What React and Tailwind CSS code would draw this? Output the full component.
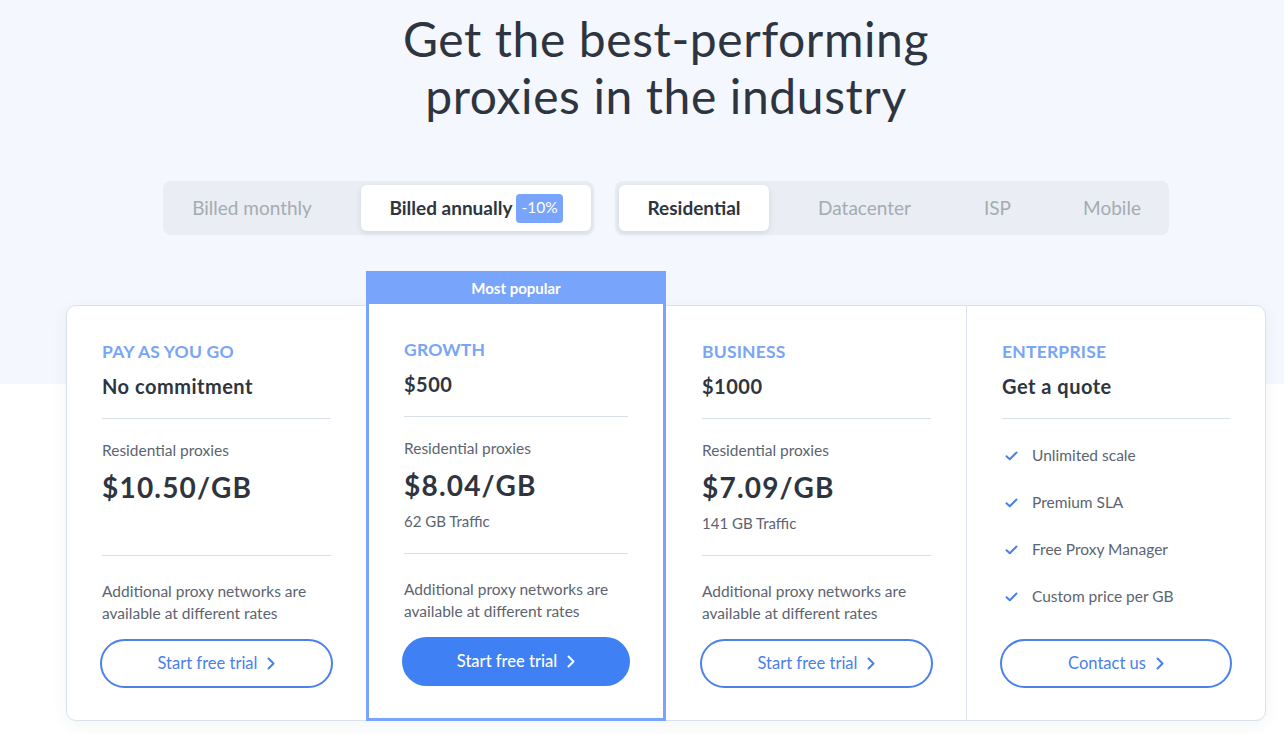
import React from "react";

const Chevron = ({ className = "" }) => (
  <svg className={className} width="8" height="13" viewBox="0 0 8 13" fill="none">
    <path d="M1.5 1.5L6.5 6.5L1.5 11.5" stroke="currentColor" strokeWidth="2" strokeLinecap="round" strokeLinejoin="round" />
  </svg>
);

const Check = () => (
  <svg width="13" height="10" viewBox="0 0 13 10" fill="none">
    <path d="M1.5 5.2L4.8 8.3L11.5 1.5" stroke="#4a80e8" strokeWidth="2" strokeLinecap="round" strokeLinejoin="round" />
  </svg>
);

const OutlineButton = ({ children }) => (
  <button className="-mx-[2px] h-[49px] rounded-full border-2 border-[#4a82ec] bg-white text-[#4a80e8] text-[16.5px] flex items-center justify-center gap-[10px]">
    <span>{children}</span>
    <Chevron />
  </button>
);

const PriceColumn = ({ label, title, price, traffic, highlighted, pl = "pl-[35px]" }) => (
  <div className={`flex flex-col ${pl} pr-[35px] pt-[34px] pb-[32px] h-full`}>
    <div className="text-[17.5px] leading-[24px] font-bold text-[#78a5f5] tracking-[0.2px]">{label}</div>
    <div className="mt-[9px] text-[20px] leading-[26px] font-bold text-[#2e3540] tracking-[0.5px]">{title}</div>
    <div className="mt-[19px] h-px bg-[#d9dfe6]" />
    <div className="h-[136px] flex flex-col">
      <div className="mt-[20px] text-[15.5px] leading-[22px] text-[#5c6470]">Residential proxies</div>
      <div className="mt-[8px] text-[28px] leading-[36px] font-bold text-[#2e3540] tracking-[1.2px]">{price}</div>
      {traffic && <div className="mt-[8px] text-[15px] leading-[20px] text-[#5c6470]">{traffic}</div>}
    </div>
    <div className="h-px bg-[#d9dfe6]" />
    <div className="mt-[24px] text-[15.5px] leading-[22px] text-[#5c6470]">
      Additional proxy networks are
      <br />
      available at different rates
    </div>
    <div className="mt-auto flex flex-col">
      {highlighted ? (
        <button className="-mx-[2px] h-[49px] rounded-full bg-[#4080f5] text-white text-[16.5px] font-medium flex items-center justify-center gap-[10px]">
          <span>Start free trial</span>
          <Chevron />
        </button>
      ) : (
        <OutlineButton>Start free trial</OutlineButton>
      )}
    </div>
  </div>
);

export default function App() {
  return (
    <div
      className="min-h-[734px] w-full bg-[linear-gradient(to_bottom,#f4f7fe_384px,#ffffff_384px)] pl-[48px] overflow-hidden"
      style={{ fontFamily: "Lato, 'Noto Sans', sans-serif" }}
    >
      <div className="flex flex-col items-center">
        <h1 className="pt-[10px] text-center text-[48px] leading-[57px] font-normal text-[#2e3540] tracking-[0.6px]">
          Get the best-performing
          <br />
          proxies in the industry
        </h1>

        <div className="mt-[57px] flex gap-[21px]">
          <div className="flex h-[54px] items-stretch gap-[24px] rounded-[8px] bg-[#eaeef4] pt-[4px] pb-[4px] pl-[4px] pr-[3px]">
            <div className="w-[170px] flex items-center justify-center text-[19px] text-[#a5abb2]">Billed monthly</div>
            <div className="w-[230px] flex items-center justify-center gap-[4px] rounded-[6px] bg-white shadow-[0_2px_6px_rgba(40,60,90,0.12)]">
              <span className="text-[19px] font-bold text-[#2e3540]">Billed annually</span>
              <span className="h-[29px] px-[5px] flex items-center rounded-[4px] bg-[#78a5fb] text-white text-[15.5px]">-10%</span>
            </div>
          </div>

          <div className="flex h-[54px] items-stretch gap-[24px] rounded-[8px] bg-[#eaeef4] p-[4px]">
            <div className="w-[150px] flex items-center justify-center rounded-[6px] bg-white shadow-[0_2px_6px_rgba(40,60,90,0.12)] text-[19px] font-bold text-[#2e3540]">
              Residential
            </div>
            <div className="w-[143px] flex items-center justify-center text-[19px] text-[#a5abb2]">Datacenter</div>
            <div className="w-[75px] flex items-center justify-center text-[19px] text-[#a5abb2]">ISP</div>
            <div className="w-[106px] flex items-center justify-center text-[19px] text-[#a5abb2]">Mobile</div>
          </div>
        </div>

        <div className="mt-[70px] h-[416px] w-[1200px] rounded-[10px] border border-[#dbe1e8] bg-white shadow-[0_4px_16px_rgba(40,60,90,0.06)] grid grid-cols-[299px_300px_300px_299px]">
          <PriceColumn label="PAY AS YOU GO" title="No commitment" price="$10.50/GB" />

          <div className="-mt-[35px] -mb-px border-[3px] border-[#78a5fb] bg-white flex flex-col">
            <div className="h-[31px] -mt-px bg-[#78a5fb] flex items-center justify-center text-white text-[15px] font-bold">
              Most popular
            </div>
            <div className="flex-1">
              <PriceColumn label="GROWTH" title="$500" price="$8.04/GB" traffic="62 GB Traffic" highlighted />
            </div>
          </div>

          <PriceColumn label="BUSINESS" title="$1000" price="$7.09/GB" traffic="141 GB Traffic" pl="pl-[36px]" />

          <div className="border-l border-[#dbe1e8] flex flex-col px-[35px] pt-[34px] pb-[32px]">
            <div className="text-[17.5px] leading-[24px] font-bold text-[#78a5f5] tracking-[0.2px]">ENTERPRISE</div>
            <div className="mt-[9px] text-[20px] leading-[26px] font-bold text-[#2e3540] tracking-[0.5px]">Get a quote</div>
            <div className="mt-[19px] h-px bg-[#d9dfe6]" />
            <ul className="mt-[26px] flex flex-col gap-[25px]">
              {["Unlimited scale", "Premium SLA", "Free Proxy Manager", "Custom price per GB"].map((t) => (
                <li key={t} className="flex items-center h-[22px] text-[15.5px] text-[#5c6470]">
                  <span className="w-[30px] pl-[3px] flex items-center">
                    <Check />
                  </span>
                  {t}
                </li>
              ))}
            </ul>
            <div className="mt-auto flex flex-col">
              <OutlineButton>Contact us</OutlineButton>
            </div>
          </div>
        </div>
      </div>
    </div>
  );
}
